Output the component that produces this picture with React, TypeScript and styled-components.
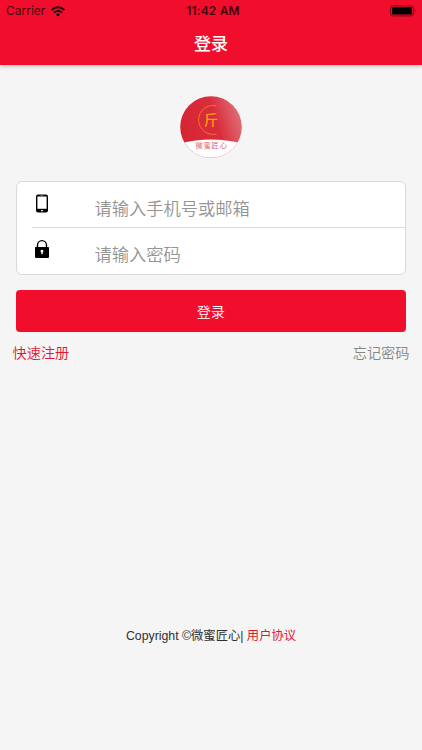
import React from "react";
import styled, { createGlobalStyle } from "styled-components";

const GlobalStyle = createGlobalStyle`
  * { box-sizing: border-box; }
  body { margin: 0; background: #f5f5f5; }
`;

const Screen = styled.div`
  display: flex;
  flex-direction: column;
  width: 100%;
  height: 750px;
  overflow: hidden;
  background: #f5f5f5;
  font-family: Inter, "Noto Sans CJK SC", sans-serif;
`;

const Header = styled.header`
  flex: none;
  height: 65px;
  background: #f00e2c;
  box-shadow: 0 1px 4px rgba(0, 0, 0, 0.28);
`;

const StatusBar = styled.div`
  display: grid;
  grid-template-columns: 1fr auto 1fr;
  align-items: center;
  height: 22px;
  padding: 0 5px 0 6px;
  font-size: 11.8px;
  line-height: 22px;
  color: #42040c;
`;

const Carrier = styled.div`
  display: flex;
  align-items: center;
  gap: 6px;
  letter-spacing: 0.1px;
`;

const Clock = styled.div`
  font-weight: 600;
  font-size: 12px;
  letter-spacing: 0.15px;
  padding-left: 3px;
`;

const Battery = styled.svg`
  justify-self: end;
`;

const Title = styled.h1`
  margin: 0;
  text-align: center;
  font-size: 17px;
  font-weight: 500;
  line-height: 42px;
  color: #fff;
  font-family: "Noto Sans CJK SC", sans-serif;
`;

const Logo = styled.svg`
  flex: none;
  align-self: center;
  margin-top: 31px;
`;

const Form = styled.form`
  display: flex;
  flex-direction: column;
  margin: 23px 16px 0 15.5px;
`;

const Fields = styled.div`
  height: 94px;
  padding-left: 15px;
  background: #fff;
  border: 1px solid #d9d9d9;
  border-radius: 6px;
`;

const Field = styled.label<{ $divided?: boolean }>`
  display: flex;
  align-items: center;
  height: 46px;
  border-bottom: ${(p) => (p.$divided ? "1px solid #dcdcdc" : "0")};
`;

const FieldIcon = styled.svg`
  flex: none;
  margin: 0 43px 4px 0;
`;

const Input = styled.input`
  flex: 1;
  min-width: 0;
  height: 30px;
  padding: 0;
  margin-top: 6px;
  border: 0;
  outline: 0;
  background: none;
  font: 350 17.25px/30px "Noto Sans CJK SC", sans-serif;
  &::placeholder { color: #949494; opacity: 1; }
`;

const Submit = styled.button`
  height: 42px;
  margin-top: 15px;
  padding: 0;
  border: 0;
  border-radius: 4px;
  background: #f00e2c;
  color: #fff;
  font: 350 14.1px/42px "Noto Sans CJK SC", sans-serif;
`;

const Links = styled.nav`
  display: flex;
  justify-content: space-between;
  padding: 10px 12.5px 0;
`;

const TextLink = styled.a<{ $tone: string }>`
  color: ${(p) => p.$tone};
  font: 350 14.2px/21px "Noto Sans CJK SC", sans-serif;
`;

const Footer = styled.footer`
  margin-top: auto;
  padding-bottom: 105px;
  text-align: center;
  font-size: 12.3px;
  line-height: 18px;
  color: #303030;
  font-family: "Liberation Sans", "Noto Sans CJK SC", sans-serif;
`;

const Agreement = styled.a`
  color: #df1735;
`;

export default function App() {
  return (
    <Screen>
      <GlobalStyle />
      <Header>
        <StatusBar>
          <Carrier>
            <span>Carrier</span>
            <svg width="14" height="11" viewBox="0 0 14 11" fill="none" stroke="#16050a" strokeWidth="2">
              <path d="M.7 4.1C4.3.4 9.7.4 13.3 4.1" />
              <path d="M3 6.6C5.2 4.3 8.8 4.3 11 6.6" />
              <path d="M4.9 8.4C6.1 7.2 7.9 7.2 9.1 8.4L7 10.5Z" fill="#16050a" stroke="none" />
            </svg>
          </Carrier>
          <Clock>11:42 AM</Clock>
          <Battery width="27" height="12" viewBox="0 0 27 12">
            <rect x=".6" y=".9" width="22.8" height="10" rx="2" fill="none" stroke="#78091a" />
            <rect x="2" y="2.3" width="20" height="7.2" rx=".8" fill="#000" />
            <path d="M24.7 4.2Q26.1 4.6 26.1 5.8T24.7 7.6Z" fill="#78091a" />
          </Battery>
        </StatusBar>
        <Title>登录</Title>
      </Header>

      <Logo width="62" height="62" viewBox="0 0 62 62">
        <defs>
          <linearGradient id="logoRed" x1="0" y1=".65" x2="1" y2=".35">
            <stop offset="0" stopColor="#d52532" />
            <stop offset=".6" stopColor="#d92d3b" />
            <stop offset="1" stopColor="#e0707a" />
          </linearGradient>
          <clipPath id="logoDisc">
            <circle cx="31" cy="31" r="30.8" />
          </clipPath>
        </defs>
        <g clipPath="url(#logoDisc)">
          <rect width="62" height="62" fill="url(#logoRed)" />
          <path d="M0 47.5Q31 39.5 62 47.5V62H0Z" fill="#fff" />
        </g>
        <path d="M36.5 9.8A14.5 14.5 0 1 0 36.5 38" fill="none" stroke="#ee7c2b" strokeWidth=".9" />
        <text x="31" y="28.8" textAnchor="middle" fontFamily="Noto Sans CJK SC, sans-serif" fontSize="14" fontWeight="500" fill="#ff9d13">斤</text>
        <text x="15.4" y="52.4" fontFamily="Noto Sans CJK SC, sans-serif" fontSize="7.2" letterSpacing=".9" fill="#dc6270">微蜜匠心</text>
      </Logo>

      <Form>
        <Fields>
          <Field $divided>
            <FieldIcon width="20" height="20" viewBox="0 0 20 20">
              <rect x="4" y="1.4" width="12" height="18" rx="2" fill="#000" />
              <path d="M5.4 3.5h9.2v12.3H5.4z" fill="#fff" />
              <path d="M8.4 2.4h3.2" stroke="#999" strokeWidth=".6" />
              <rect x="9" y="16.9" width="2" height="1.4" rx=".6" fill="#fff" />
            </FieldIcon>
            <Input type="text" placeholder="请输入手机号或邮箱" />
          </Field>
          <Field>
            <FieldIcon width="20" height="20" viewBox="0 0 20 20">
              <path d="M5.5 9V6.1a4.5 4.5 0 0 1 9 0V9" fill="none" stroke="#000" strokeWidth="1.4" />
              <rect x="3" y="8" width="14" height="10.9" rx=".8" fill="#000" />
              <path d="M10 10.7a1.5 1.5 0 0 1 .7 2.8v1.7H9.3v-1.7A1.5 1.5 0 0 1 10 10.7Z" fill="#fff" />
            </FieldIcon>
            <Input type="password" placeholder="请输入密码" />
          </Field>
        </Fields>
        <Submit type="button">登录</Submit>
      </Form>

      <Links>
        <TextLink $tone="#e21435">快速注册</TextLink>
        <TextLink $tone="#858585">忘记密码</TextLink>
      </Links>

      <Footer>
        Copyright ©微蜜匠心| <Agreement>用户协议</Agreement>
      </Footer>
    </Screen>
  );
}
